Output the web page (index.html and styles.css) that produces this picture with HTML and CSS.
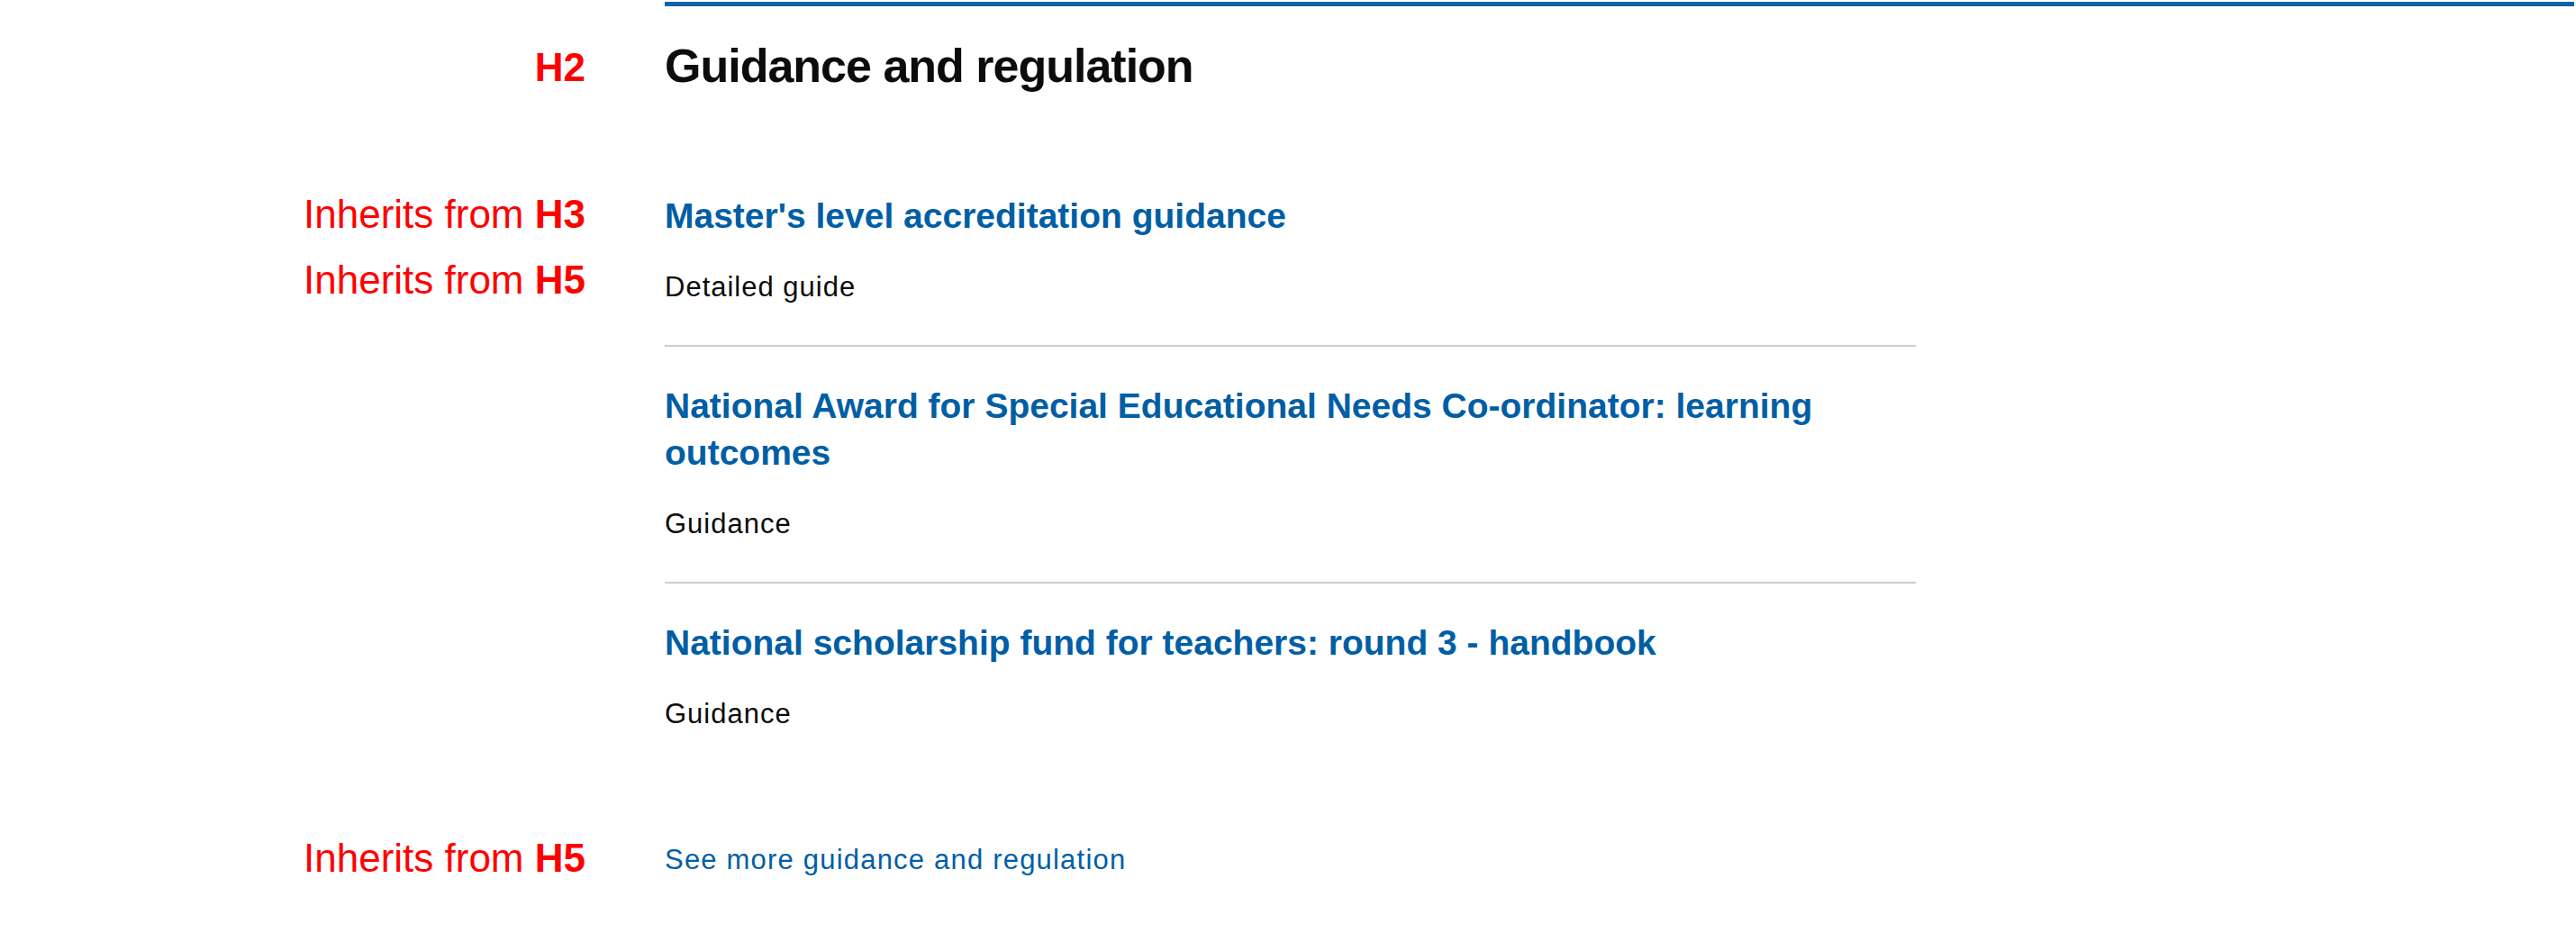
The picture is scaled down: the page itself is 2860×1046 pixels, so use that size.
FILE: index.html
```html
<!DOCTYPE html>
<html lang="en">
<head>
<meta charset="utf-8">
<title>Guidance and regulation</title>
<link rel="stylesheet" href="styles.css">
</head>
<body>
<main class="page">
  <div class="label label-h2"><strong>H2</strong></div>
  <header class="section-head">
    <h2 class="section-title">Guidance and regulation</h2>
  </header>

  <div class="label-stack">
    <div class="label label-first">Inherits from <strong>H3</strong></div>
    <div class="label label-second">Inherits from <strong>H5</strong></div>
  </div>
  <ul class="doc-list">
    <li class="doc-item">
      <h3 class="doc-title"><a href="#">Master's level accreditation guidance</a></h3>
      <p class="doc-meta">Detailed guide</p>
    </li>
    <li class="doc-item">
      <h3 class="doc-title"><a href="#">National Award for Special Educational Needs Co-ordinator: learning outcomes</a></h3>
      <p class="doc-meta">Guidance</p>
    </li>
    <li class="doc-item">
      <h3 class="doc-title"><a href="#">National scholarship fund for teachers: round 3 - handbook</a></h3>
      <p class="doc-meta">Guidance</p>
    </li>
  </ul>

  <div class="label label-more">Inherits from <strong>H5</strong></div>
  <div class="more">
    <a class="more-link" href="#">See more guidance and regulation</a>
  </div>
</main>
</body>
</html>
```

FILE: styles.css
```css
html, body {
  margin: 0;
  padding: 0;
  background: #ffffff;
}

body {
  font-family: "Liberation Sans", Arial, sans-serif;
  color: #0b0c0c;
}

.page {
  display: grid;
  grid-template-columns: 650px 1fr;
  column-gap: 88px;
  align-items: start;
  padding: 2px 2px 40px 0;
}

/* red annotation labels */
.label {
  color: #ff0000;
  font-size: 44px;
  line-height: 50px;
  text-align: right;
  white-space: nowrap;
}

.label strong {
  font-weight: 700;
}

.label-h2 {
  padding-top: 48px;
}

.label-stack {
  padding-top: 110px;
}

.label-second {
  margin-top: 23px;
}

.label-more {
  padding-top: 71px;
}

/* section heading */
.section-head {
  border-top: 5px solid #0b63a8;
  padding-top: 36px;
}

.section-title {
  margin: 0;
  font-size: 52px;
  line-height: 60px;
  font-weight: 700;
  letter-spacing: -1px;
  color: #0b0c0c;
}

/* document list */
.doc-list {
  list-style: none;
  margin: 0;
  padding: 70px 0 0 0;
  max-width: 1389px;
}

.doc-item {
  padding: 40px 0 44px;
  border-bottom: 2px solid #cdcdcd;
}

.doc-item:first-child {
  padding-top: 40.5px;
}

.doc-item:last-child {
  border-bottom: none;
}

.doc-title {
  margin: 0;
  font-size: 39px;
  line-height: 52px;
  font-weight: 700;
}

.doc-title a {
  color: #005ea5;
  text-decoration: none;
}

.doc-meta {
  margin: 33px 0 0;
  font-size: 31px;
  line-height: 40px;
  letter-spacing: 1px;
  color: #0b0c0c;
}

/* see more link */
.more {
  padding-top: 78px;
}

.more-link {
  display: block;
  font-size: 31px;
  line-height: 40px;
  letter-spacing: 1.2px;
  color: #005ea5;
  text-decoration: none;
}
```
